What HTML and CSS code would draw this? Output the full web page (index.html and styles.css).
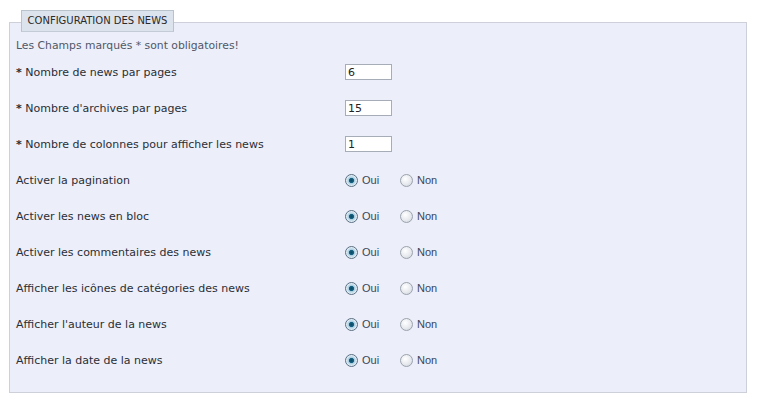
FILE: index.html
```html
<!DOCTYPE html>
<html lang="fr">
<head>
<meta charset="utf-8">
<link rel="stylesheet" href="styles.css">
</head>
<body>
<div class="box">
  <div class="legend">CONFIGURATION DES NEWS</div>
  <p class="intro">Les Champs marqués * sont obligatoires!</p>
  <div class="rows">
    <div class="row"><span class="lbl"><b>*</b> Nombre de news par pages</span><input class="txt" type="text" value="6"></div>
    <div class="row"><span class="lbl"><b>*</b> Nombre d'archives par pages</span><input class="txt" type="text" value="15"></div>
    <div class="row"><span class="lbl"><b>*</b> Nombre de colonnes pour afficher les news</span><input class="txt" type="text" value="1"></div>
    <div class="row"><span class="lbl">Activer la pagination</span><div class="opts"><label class="opt"><input type="radio" name="r1" checked><span>Oui</span></label><label class="opt"><input type="radio" name="r1"><span>Non</span></label></div></div>
    <div class="row"><span class="lbl">Activer les news en bloc</span><div class="opts"><label class="opt"><input type="radio" name="r2" checked><span>Oui</span></label><label class="opt"><input type="radio" name="r2"><span>Non</span></label></div></div>
    <div class="row"><span class="lbl">Activer les commentaires des news</span><div class="opts"><label class="opt"><input type="radio" name="r3" checked><span>Oui</span></label><label class="opt"><input type="radio" name="r3"><span>Non</span></label></div></div>
    <div class="row"><span class="lbl">Afficher les icônes de catégories des news</span><div class="opts"><label class="opt"><input type="radio" name="r4" checked><span>Oui</span></label><label class="opt"><input type="radio" name="r4"><span>Non</span></label></div></div>
    <div class="row"><span class="lbl">Afficher l'auteur de la news</span><div class="opts"><label class="opt"><input type="radio" name="r5" checked><span>Oui</span></label><label class="opt"><input type="radio" name="r5"><span>Non</span></label></div></div>
    <div class="row"><span class="lbl">Afficher la date de la news</span><div class="opts"><label class="opt"><input type="radio" name="r6" checked><span>Oui</span></label><label class="opt"><input type="radio" name="r6"><span>Non</span></label></div></div>
  </div>
</div>
</body>
</html>
```
FILE: styles.css
```css
html, body {
  margin: 0;
  padding: 0;
  background: #ffffff;
}
body {
  font-family: "DejaVu Sans", Verdana, sans-serif;
  font-size: 11px;
  color: #2a2e36;
}
.box {
  margin: 22px 0 0 9px;
  width: 738px;
  height: 371px;
  border: 1px solid #cdd0d8;
  background: #eceef9;
  padding: 0 6px 0 6px;
  box-sizing: border-box;
}
.legend {
  margin: -13px 0 0 5px;
  width: 153px;
  height: 22px;
  box-sizing: border-box;
  background: #dde3ec;
  border: 1px solid #b9c3ce;
  border-bottom-color: #c3ccd6;
  font-size: 10px;
  color: #2a2a2a;
  text-align: center;
  line-height: 20px;
}
.intro {
  margin: 6px 0 0 0;
  line-height: 16px;
  font-size: 10.8px;
  color: #4f5868;
}
.rows {
  display: flex;
  flex-direction: column;
}
.row {
  height: 36px;
  display: grid;
  grid-template-columns: 329px auto;
  align-items: center;
}
.lbl b {
  font-weight: bold;
}
.txt {
  width: 47px;
  height: 16px;
  box-sizing: border-box;
  margin: 0;
  padding: 0 2px;
  border: 1px solid #a7adb6;
  background: #fff;
  font-family: "DejaVu Sans", Verdana, sans-serif;
  font-size: 11px;
  color: #222;
  outline: none;
}
.opts {
  display: flex;
}
.opt {
  display: flex;
  align-items: center;
  width: 55px;
  font-family: "Liberation Sans", Arial, sans-serif;
  font-size: 11px;
  color: #3a4656;
}
.opt input {
  appearance: none;
  -webkit-appearance: none;
  width: 13px;
  height: 13px;
  margin: 0 4px 0 0;
  border-radius: 50%;
  border: 1px solid #9aa3ad;
  background: radial-gradient(circle at 40% 35%, #ffffff 0%, #e4e7ec 60%, #c9ced6 100%);
  box-sizing: border-box;
}
.opt input:checked {
  border-color: #5a6f84;
  background: radial-gradient(circle at 50% 50%, #0d4a66 0%, #14607e 28%, #a8cde0 38%, #e9f2f8 70%, #d0d8e0 100%);
}
```
